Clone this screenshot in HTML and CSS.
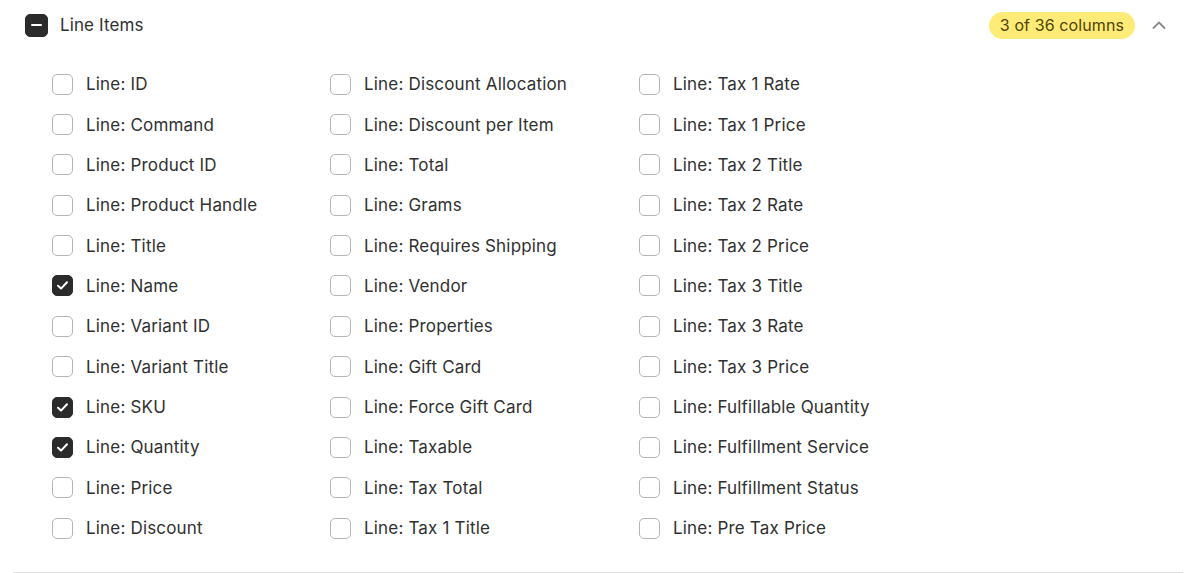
FILE: index.html
```html
<!DOCTYPE html>
<html>
<head>
<meta charset="utf-8">
<link rel="stylesheet" href="styles.css">
</head>
<body>
<div class="section">
  <div class="header">
    <span class="box box-on"><span class="minus"></span></span>
    <span class="title">Line Items</span>
    <span class="badge">3 of 36 columns</span>
    <span class="chev"><svg width="14" height="8" viewBox="0 0 14 8"><path d="M1.5 7 L7 1.5 L12.5 7" fill="none" stroke="#8a8a8a" stroke-width="1.8" stroke-linecap="round" stroke-linejoin="round"/></svg></span>
  </div>
  <div class="grid">
    <div class="col">
      <label class="item"><span class="box"></span>Line: ID</label>
      <label class="item"><span class="box"></span>Line: Command</label>
      <label class="item"><span class="box"></span>Line: Product ID</label>
      <label class="item"><span class="box"></span>Line: Product Handle</label>
      <label class="item"><span class="box"></span>Line: Title</label>
      <label class="item"><span class="box box-on"><svg width="13" height="11" viewBox="0 0 13 11"><path d="M2 5.8 L5 8.6 L11 2.2" fill="none" stroke="#fff" stroke-width="2" stroke-linecap="round" stroke-linejoin="round"/></svg></span>Line: Name</label>
      <label class="item"><span class="box"></span>Line: Variant ID</label>
      <label class="item"><span class="box"></span>Line: Variant Title</label>
      <label class="item"><span class="box box-on"><svg width="13" height="11" viewBox="0 0 13 11"><path d="M2 5.8 L5 8.6 L11 2.2" fill="none" stroke="#fff" stroke-width="2" stroke-linecap="round" stroke-linejoin="round"/></svg></span>Line: SKU</label>
      <label class="item"><span class="box box-on"><svg width="13" height="11" viewBox="0 0 13 11"><path d="M2 5.8 L5 8.6 L11 2.2" fill="none" stroke="#fff" stroke-width="2" stroke-linecap="round" stroke-linejoin="round"/></svg></span>Line: Quantity</label>
      <label class="item"><span class="box"></span>Line: Price</label>
      <label class="item"><span class="box"></span>Line: Discount</label>
    </div>
    <div class="col">
      <label class="item"><span class="box"></span>Line: Discount Allocation</label>
      <label class="item"><span class="box"></span>Line: Discount per Item</label>
      <label class="item"><span class="box"></span>Line: Total</label>
      <label class="item"><span class="box"></span>Line: Grams</label>
      <label class="item"><span class="box"></span>Line: Requires Shipping</label>
      <label class="item"><span class="box"></span>Line: Vendor</label>
      <label class="item"><span class="box"></span>Line: Properties</label>
      <label class="item"><span class="box"></span>Line: Gift Card</label>
      <label class="item"><span class="box"></span>Line: Force Gift Card</label>
      <label class="item"><span class="box"></span>Line: Taxable</label>
      <label class="item"><span class="box"></span>Line: Tax Total</label>
      <label class="item"><span class="box"></span>Line: Tax 1 Title</label>
    </div>
    <div class="col">
      <label class="item"><span class="box"></span>Line: Tax 1 Rate</label>
      <label class="item"><span class="box"></span>Line: Tax 1 Price</label>
      <label class="item"><span class="box"></span>Line: Tax 2 Title</label>
      <label class="item"><span class="box"></span>Line: Tax 2 Rate</label>
      <label class="item"><span class="box"></span>Line: Tax 2 Price</label>
      <label class="item"><span class="box"></span>Line: Tax 3 Title</label>
      <label class="item"><span class="box"></span>Line: Tax 3 Rate</label>
      <label class="item"><span class="box"></span>Line: Tax 3 Price</label>
      <label class="item"><span class="box"></span>Line: Fulfillable Quantity</label>
      <label class="item"><span class="box"></span>Line: Fulfillment Service</label>
      <label class="item"><span class="box"></span>Line: Fulfillment Status</label>
      <label class="item"><span class="box"></span>Line: Pre Tax Price</label>
    </div>
  </div>
</div>
</body>
</html>
```

FILE: styles.css
```css
html, body {
  margin: 0;
  padding: 0;
  background: #fff;
}
body {
  font-family: Inter, "Noto Sans", sans-serif;
  color: #303030;
  font-size: 17px;
}
.section {
  margin: 0 17px 0 13px;
  height: 572px;
  border-bottom: 1px solid #e3e3e3;
  box-sizing: content-box;
}
.header {
  display: flex;
  align-items: center;
  height: 50px;
  padding-left: 12px;
}
.box {
  width: 19px;
  height: 19px;
  border: 1px solid #b5b5b5;
  border-radius: 5px;
  background: #fff;
  display: inline-flex;
  align-items: center;
  justify-content: center;
  flex: none;
}
.box-on {
  background: #2b2b2b;
  border-color: #2b2b2b;
}
.header .box {
  width: 21px;
  height: 21px;
}
.minus {
  width: 11px;
  height: 2px;
  border-radius: 1px;
  background: #fff;
}
.title {
  margin-left: 12px;
  flex: 1;
  letter-spacing: 0.1px;
}
.badge {
  background: #ffeb78;
  color: #4f4200;
  border-radius: 14px;
  height: 27px;
  line-height: 27px;
  padding: 0 11px;
  font-size: 16px;
  letter-spacing: 0.1px;
}
.chev {
  width: 48px;
  display: flex;
  justify-content: center;
  align-items: center;
}
.grid {
  display: grid;
  grid-template-columns: 278px 309px 1fr;
  padding: 14px 0 0 39px;
}
.item {
  display: flex;
  align-items: center;
  height: 40.36px;
  gap: 13px;
  white-space: nowrap;
  letter-spacing: 0.18px;
}
```
